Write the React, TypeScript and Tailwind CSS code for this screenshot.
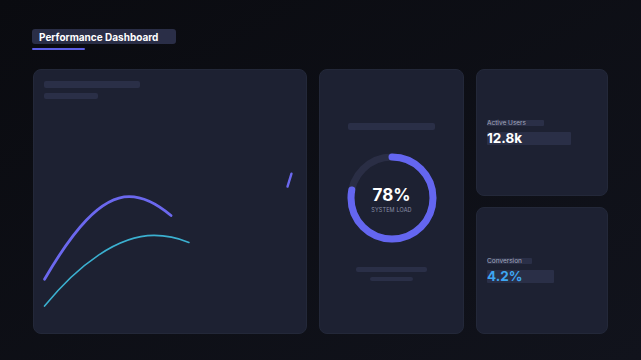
import React from "react";

const CIRC = 2 * Math.PI * 41;

function Bar({ className }: { className: string }) {
  return <div className={`rounded-[2px] bg-[#2a2f47] ${className}`} />;
}

function TrendCard() {
  return (
    <div className="flex flex-col overflow-hidden rounded-lg border border-[#232839] bg-[#1d2132]">
      <div className="flex flex-col gap-[5px] px-[10px] pt-[11px]">
        <Bar className="h-[7px] w-[96px]" />
        <Bar className="h-[6px] w-[54px]" />
      </div>
      <svg width="274" height="235" viewBox="0 0 274 235" className="block">
        <path
          d="M10 181 C38 133 66 98 95 98 C110 98 124 106 137 117"
          fill="none"
          stroke="#6b68ee"
          strokeWidth="2.8"
          strokeLinecap="round"
        />
        <path
          d="M10 208 C44 166 84 137 120 137 C134 137 145 140 155 144"
          fill="none"
          stroke="#3bb0d0"
          strokeWidth="1.6"
          strokeLinecap="round"
        />
        <path d="M254 88 L258 75" fill="none" stroke="#6b68ee" strokeWidth="2.4" strokeLinecap="round" />
      </svg>
    </div>
  );
}

function LoadCard() {
  return (
    <div className="flex flex-col items-center rounded-lg border border-[#232839] bg-[#1d2132] pt-[53px]">
      <Bar className="h-[7px] w-[87px]" />
      <div className="relative mt-[23px] h-[90px] w-[90px]">
        <svg width="90" height="90" viewBox="0 0 90 90" className="-rotate-90">
          <circle cx="45" cy="45" r="41" fill="none" stroke="#2a2e45" strokeWidth="7" />
          <circle
            cx="45"
            cy="45"
            r="41"
            fill="none"
            stroke="#6466f0"
            strokeWidth="7"
            strokeLinecap="round"
            strokeDasharray={`${CIRC * 0.78} ${CIRC}`}
          />
        </svg>
        <div className="absolute inset-0 flex flex-col items-center justify-center pt-[4px]">
          <div className="text-[17px] font-bold leading-none text-white">78%</div>
          <div className="mt-[4px] text-[5.5px] uppercase leading-none tracking-wide text-[#8a90a8]">System Load</div>
        </div>
      </div>
      <Bar className="mt-[24px] h-[5px] w-[71px]" />
      <Bar className="mt-[5px] h-[4px] w-[43px]" />
    </div>
  );
}

function StatCard({ label, value, labelW, valueW, tone }: { label: string; value: string; labelW: string; valueW: string; tone: string }) {
  return (
    <div className="flex flex-1 flex-col justify-center rounded-lg border border-[#232839] bg-[#1d2132] px-[10px]">
      <div className={`h-[6px] rounded-[1px] bg-[#2a2f47] ${labelW}`}>
        <span className="block text-[6.5px] leading-[6px] text-[#a3a8bd]">{label}</span>
      </div>
      <div className={`mt-[6px] h-[13px] rounded-[1px] bg-[#2a2f47] ${valueW}`}>
        <span className={`block text-[13.5px] font-bold leading-[13px] ${tone}`}>{value}</span>
      </div>
    </div>
  );
}

export default function App() {
  return (
    <div
      className="h-[360px] w-[641px] overflow-hidden bg-gradient-to-br from-[#0a0b10] to-[#11131c] px-[32px] pt-[29px]"
      style={{ fontFamily: "Inter, 'Noto Sans', sans-serif" }}
    >
      <div className="flex h-[15px] w-[144px] items-center rounded-[3px] bg-[#2a2e47] px-[7px]">
        <span className="text-[10px] font-bold leading-none text-white">Performance Dashboard</span>
      </div>
      <div className="mt-[4px] h-[2px] w-[53px] rounded-full bg-[#5d5fe6]" />
      <div className="ml-[1px] mt-[19px] grid h-[265px] grid-cols-[274px_145px_132px] gap-x-[12px]">
        <TrendCard />
        <LoadCard />
        <div className="flex flex-col gap-[11px]">
          <StatCard label="Active Users" value="12.8k" labelW="w-[57px]" valueW="w-[84px]" tone="text-white" />
          <StatCard label="Conversion" value="4.2%" labelW="w-[45px]" valueW="w-[67px]" tone="text-[#3ea6f2]" />
        </div>
      </div>
    </div>
  );
}
